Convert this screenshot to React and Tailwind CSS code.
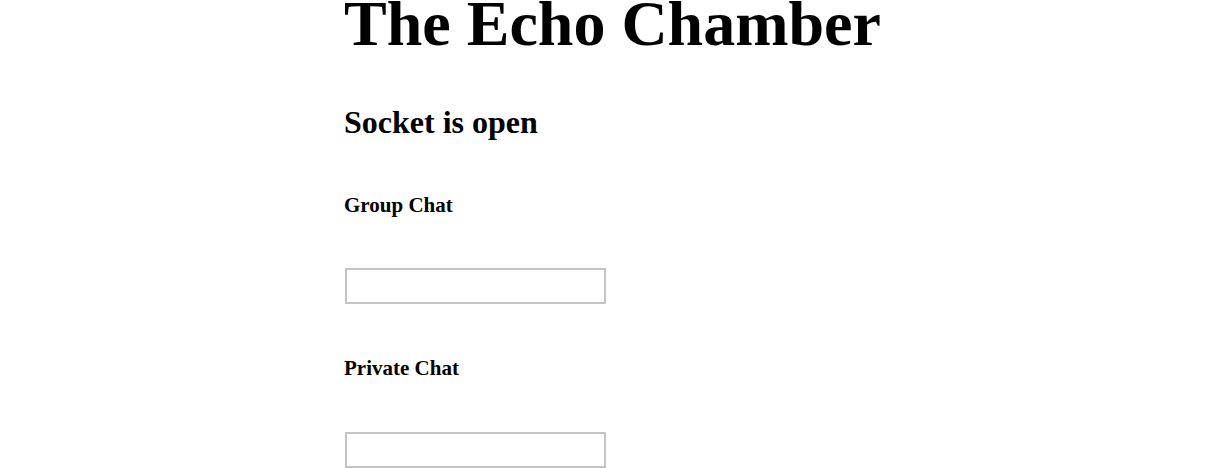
export default function App() {
  return (
    <div className="min-h-screen bg-white text-black font-['Liberation_Serif',serif]">
      <div className="mx-auto w-[537px] flex flex-col items-start">
        <h1 className="mt-[-8px] text-[64px] font-bold leading-none whitespace-nowrap">The Echo Chamber</h1>
        <h2 className="mt-[50px] text-[32px] font-bold leading-none">Socket is open</h2>
        <h3 className="mt-[57px] text-[21px] font-bold leading-none">Group Chat</h3>
        <input type="text" className="mt-[52px] ml-px w-[261px] h-[36px] border-2 border-[#c4c4c4] bg-white outline-none" />
        <h3 className="mt-[54px] text-[21px] font-bold leading-none">Private Chat</h3>
        <input type="text" className="mt-[53px] ml-px w-[261px] h-[36px] border-2 border-[#c4c4c4] bg-white outline-none" />
      </div>
    </div>
  );
}
